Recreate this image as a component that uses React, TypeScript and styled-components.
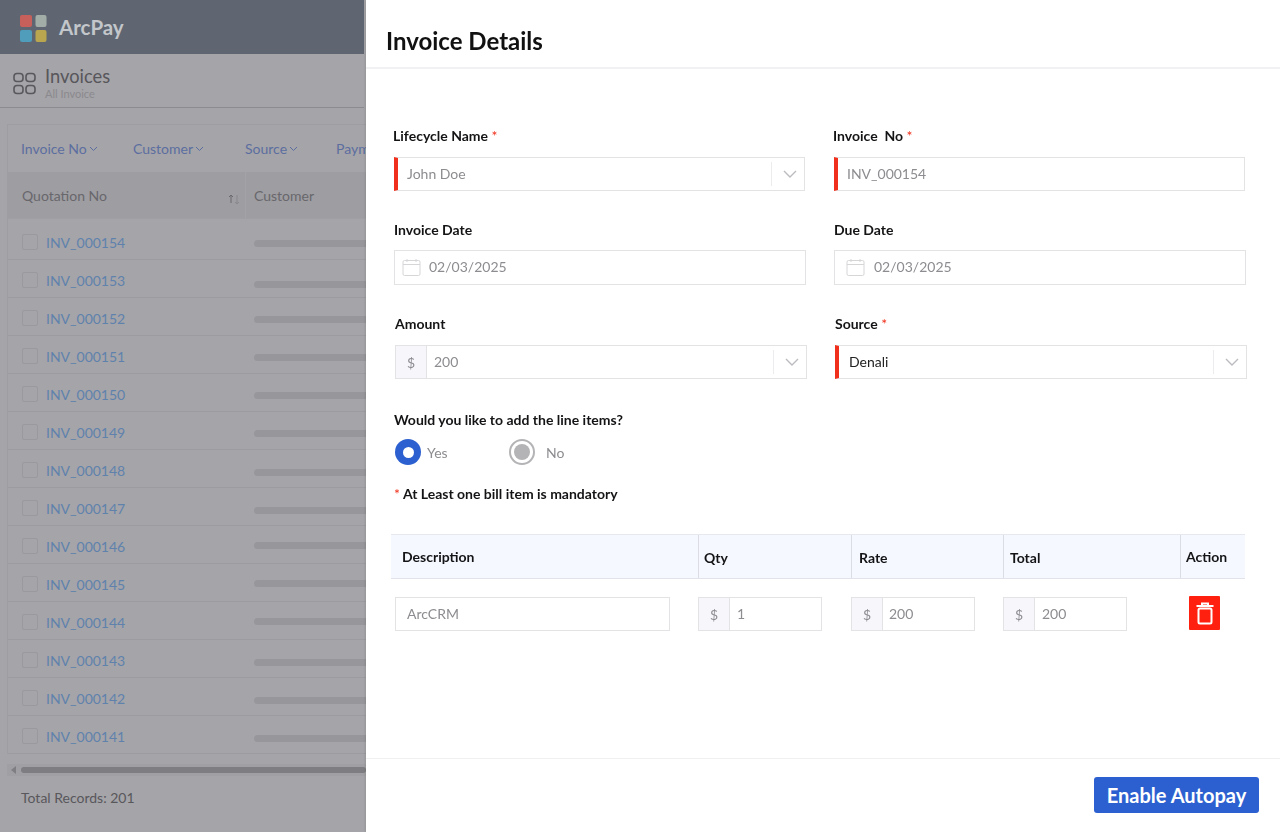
import React from 'react';
import styled, { createGlobalStyle } from 'styled-components';

const GlobalStyle = createGlobalStyle`
  html, body {
    margin: 0;
    padding: 0;
    height: 100%;
    overflow: hidden;
    font-family: 'Lato', 'Liberation Sans', sans-serif;
    background: #a5a4a8;
  }
  * {
    box-sizing: border-box;
  }
`;

const Page = styled.div`
  width: 1280px;
  height: 832px;
  background: #a5a4a8;
  overflow: hidden;
`;

const TopBar = styled.div`
  height: 54px;
  width: 364px;
  background: #5f6672;
  display: flex;
  align-items: center;
  padding-left: 20px;
  gap: 12px;
`;

const LogoMark = styled.svg`
  margin-top: 4px;
  flex: none;
`;

const Brand = styled.span`
  font-size: 20.5px;
  font-weight: 700;
  color: #c3c6ca;
`;

const SubHeader = styled.div`
  height: 54px;
  width: 364px;
  border-bottom: 1px solid #8c8b8f;
  display: flex;
  align-items: center;
  padding: 3px 0 0 13px;
  gap: 9px;
`;

const AppsMark = styled.svg`
  margin-top: 2px;
  flex: none;
`;

const SubTitle = styled.div`
  font-size: 18.3px;
  line-height: 22px;
  color: #57565b;
`;

const SubCaption = styled.div`
  font-size: 11px;
  line-height: 12px;
  margin-top: 1px;
  color: #8a898e;
`;

const Card = styled.div`
  margin: 16px 0 0 7px;
  width: 400px;
  border: 1px solid #9e9da1;
  border-bottom: 0;
`;

const FilterRow = styled.div`
  height: 47px;
  display: flex;
  align-items: center;
  padding-left: 13px;
`;

const Filter = styled.div<{ $width: number }>`
  width: ${(props) => props.$width}px;
  flex: none;
  display: flex;
  align-items: center;
  gap: 2px;
  font-size: 14px;
  color: #5c6ea0;
`;

const HeadRow = styled.div`
  height: 47px;
  background: #9e9da1;
  border-bottom: 1px solid #a09fa3;
  display: flex;
  align-items: stretch;
  font-size: 14px;
  color: #68676c;
`;

const HeadCell = styled.div<{ $width: number }>`
  width: ${(props) => props.$width}px;
  flex: none;
  display: flex;
  align-items: center;
  justify-content: space-between;
  padding: 0 5px 0 14px;
  border-right: 1px solid #a3a2a6;
`;

const SortMark = styled.svg`
  margin-top: 7px;
  flex: none;
`;

const HeadCustomer = styled.div`
  display: flex;
  align-items: center;
  padding-left: 8px;
`;

const Rows = styled.div`
  padding-top: 3px;
`;

const Row = styled.div`
  height: 38px;
  border-bottom: 1px solid #9c9b9f;
  display: flex;
  align-items: center;
  padding: 3px 0 0 14px;
`;

const Check = styled.span`
  width: 16px;
  height: 16px;
  border: 1px solid #9a999d;
  border-radius: 2px;
  flex: none;
`;

const RowLink = styled.span`
  width: 208px;
  flex: none;
  margin-left: 8px;
  font-size: 14px;
  color: #5f82ad;
`;

const Skeleton = styled.span<{ $nudge: number }>`
  flex: 1;
  height: 7px;
  border-radius: 4px;
  background: #97969a;
  transform: translateY(${(props) => props.$nudge}px);
`;

const ScrollTrack = styled.div`
  margin: 10px 0 0 7px;
  width: 359px;
  height: 12px;
  background: #a09fa3;
  display: flex;
  align-items: center;
  padding-left: 4px;
  gap: 5px;
`;

const ScrollArrow = styled.span`
  width: 0;
  height: 0;
  border-top: 4px solid transparent;
  border-bottom: 4px solid transparent;
  border-right: 5px solid #7f7e82;
`;

const ScrollThumb = styled.span`
  flex: 1;
  height: 6px;
  border-radius: 3px;
  background: #7e7d81;
`;

const TotalRecords = styled.div`
  margin: 13px 0 0 21px;
  font-size: 14px;
  line-height: 18px;
  color: #58575c;
`;

const Drawer = styled.aside`
  position: fixed;
  top: 0;
  right: 0;
  bottom: 0;
  width: 914px;
  background: #fff;
  display: flex;
  flex-direction: column;
  box-shadow: -1px 0 2px rgba(0, 0, 0, 0.1);
`;

const DrawerHeader = styled.header`
  height: 69px;
  flex: none;
  border-bottom: 2px solid #f1f1f3;
  display: flex;
  align-items: center;
  padding: 13px 0 0 20px;
  font-size: 24px;
  font-weight: 700;
  color: #111;
`;

const DrawerBody = styled.div`
  flex: 1;
  padding: 57px 0 0 28px;
`;

const FormRow = styled.div<{ $width: number; $gap: number; $inset?: number; $top?: number }>`
  display: grid;
  grid-template-columns: 1fr 1fr;
  width: ${(props) => props.$width}px;
  column-gap: ${(props) => props.$gap}px;
  margin-left: ${(props) => props.$inset || 0}px;
  margin-top: ${(props) => props.$top || 0}px;
`;

const Label = styled.div<{ $pull?: boolean; $gap?: number }>`
  font-size: 14px;
  line-height: 20px;
  font-weight: 700;
  color: #141416;
  white-space: pre;
  margin-left: ${(props) => (props.$pull ? -1 : 0)}px;
  margin-bottom: ${(props) => props.$gap ?? 11}px;
`;

const Star = styled.span`
  color: #f0301c;
  font-weight: 400;
`;

const Field = styled.div<{ $tall?: boolean; $required?: boolean }>`
  height: ${(props) => (props.$tall ? 35 : 34)}px;
  border: 1px solid #e3e3e6;
  border-left: ${(props) => (props.$required ? '4px solid #f0301c' : '1px solid #e3e3e6')};
  display: flex;
  align-items: center;
  background: #fff;
`;

const FieldText = styled.span<{ $pad: number; $dark?: boolean }>`
  flex: 1;
  padding: 0 0 2px ${(props) => props.$pad}px;
  font-size: 14px;
  color: ${(props) => (props.$dark ? '#222' : '#8d8d91')};
`;

const SelectEnd = styled.span`
  width: 33px;
  height: 24px;
  flex: none;
  border-left: 1px solid #ececee;
  display: flex;
  align-items: center;
  justify-content: center;
  padding-left: 3px;
`;

const DateIcon = styled.svg<{ $left: number }>`
  margin-left: ${(props) => props.$left}px;
  flex: none;
`;

const Addon = styled.span`
  width: 31px;
  height: 100%;
  flex: none;
  background: #f6f6fb;
  border-right: 1px solid #e3e3e6;
  display: flex;
  align-items: center;
  justify-content: center;
  font-size: 14px;
  color: #8d8d91;
`;

const Question = styled(Label)`
  margin: 31px 0 0;
`;

const RadioRow = styled.div`
  display: flex;
  align-items: center;
  margin: 9px 0 0 1px;
  height: 26px;
`;

const RadioDot = styled.span<{ $on?: boolean }>`
  width: 26px;
  height: 26px;
  border-radius: 50%;
  flex: none;
  display: flex;
  align-items: center;
  justify-content: center;
  background: ${(props) => (props.$on ? '#2c60d0' : '#fff')};
  border: ${(props) => (props.$on ? '0' : '2px solid #b4b4b6')};
  &::after {
    content: '';
    width: ${(props) => (props.$on ? 11 : 16)}px;
    height: ${(props) => (props.$on ? 11 : 16)}px;
    border-radius: 50%;
    background: ${(props) => (props.$on ? '#fff' : '#b4b4b6')};
  }
`;

const RadioText = styled.span<{ $width: number; $gap: number }>`
  width: ${(props) => props.$width}px;
  margin-left: ${(props) => props.$gap}px;
  font-size: 14px;
  color: #8d8d91;
`;

const Mandatory = styled(Label)`
  margin: 19px 0 0;
`;

const LineTable = styled.div`
  margin: 30px 0 0 -3px;
  width: 854px;
`;

const LineHead = styled.div`
  display: grid;
  grid-template-columns: 307px 153px 152px 177px 65px;
  height: 45px;
  background: #f5f9ff;
  border-top: 1px solid #e7e8ee;
  border-bottom: 1px solid #e1e2ea;
`;

const LineHeadCell = styled.div<{ $first?: boolean; $lift?: boolean; $pad: number }>`
  display: flex;
  align-items: center;
  padding-left: ${(props) => props.$pad}px;
  padding-top: ${(props) => (props.$lift ? 0 : 1)}px;
  border-left: ${(props) => (props.$first ? '0' : '1px solid #dcdde4')};
  font-size: 14px;
  font-weight: 700;
  color: #141416;
`;

const LineRow = styled.div`
  display: grid;
  grid-template-columns: 307px 153px 152px 177px 65px;
  padding-top: 18px;
`;

const LineCell = styled.div<{ $inset?: number }>`
  padding-left: ${(props) => props.$inset || 0}px;
`;

const DescInput = styled(Field)`
  width: 275px;
`;

const MoneyInput = styled(Field)`
  width: 124px;
`;

const DeleteButton = styled.button`
  width: 31px;
  height: 34px;
  margin: -1px 0 0 9px;
  padding: 0;
  border: 0;
  border-radius: 1px;
  background: #ff2010;
  display: flex;
  align-items: center;
  justify-content: center;
`;

const DrawerFooter = styled.footer`
  height: 74px;
  flex: none;
  border-top: 1px solid #f0eff1;
  display: flex;
  justify-content: flex-end;
  align-items: flex-start;
  padding: 18px 21px 0 0;
`;

const PrimaryButton = styled.button`
  width: 165px;
  height: 36px;
  border: 0;
  border-radius: 3px;
  background: #2c60d0;
  color: #fff;
  font-family: inherit;
  font-size: 20px;
  font-weight: 700;
  padding: 0;
`;

const Logo = () => (
  <LogoMark width="27" height="28" viewBox="0 0 27 28">
    <rect x="0" y="0" width="12" height="12" rx="2" fill="#c7605a" />
    <rect x="15.500" y="0" width="11" height="12" rx="2" fill="#a3ada8" />
    <rect x="0" y="15" width="12" height="12" rx="2" fill="#4f9cbb" />
    <rect x="15.500" y="15" width="11" height="12" rx="2" fill="#baa64f" />
  </LogoMark>
);

const AppsIcon = () => (
  <AppsMark width="23" height="23" viewBox="0 0 23 23" fill="none" stroke="#59585d" strokeWidth="1.6">
    <rect x="1" y="1.500" width="9" height="8" rx="3" />
    <rect x="13" y="1.500" width="9" height="8" rx="3" />
    <rect x="1" y="13.500" width="9" height="8" rx="3" />
    <rect x="13" y="13.500" width="9" height="8" rx="3" />
  </AppsMark>
);

const SmallChevron = () => (
  <svg width="9" height="6" viewBox="0 0 9 6" fill="none" stroke="#5c6ea0" strokeWidth="1">
    <path d="M1 1l3.500 3.500L8 1" />
  </svg>
);

const SortIcon = () => (
  <SortMark width="12" height="12" viewBox="0 0 12 12" fill="none" strokeWidth="1">
    <path d="M3 10V2M1 4l2-2 2 2" stroke="#6a696e" />
    <path d="M9 2v9M7 9l2 2 2-2" stroke="#88878b" />
  </SortMark>
);

const Chevron = () => (
  <svg width="16" height="10" viewBox="0 0 16 10" fill="none" stroke="#bcbcc0" strokeWidth="1.4">
    <path d="M2 2l6 6 6-6" />
  </svg>
);

const CalendarIcon = ({ left }: { left: number }) => (
  <DateIcon $left={left} width="19" height="19" viewBox="0 0 19 19" fill="none" stroke="#d6d6d9" strokeWidth="1">
    <rect x="1" y="2.500" width="17" height="15" rx="1.500" />
    <path d="M1 6.500h17M5 1v3M14 1v3" />
  </DateIcon>
);

const TrashIcon = () => (
  <svg width="18" height="23" viewBox="0 0 18 23" fill="none" stroke="#fff" strokeWidth="2">
    <path d="M0.500 4h17" />
    <path d="M6 3V1.500h6V3" />
    <rect x="2.500" y="6.500" width="13" height="15" rx="1.500" />
  </svg>
);

const filters = [
  { name: 'Invoice No', width: 112 },
  { name: 'Customer', width: 112 },
  { name: 'Source', width: 91 },
  { name: 'Payment', width: 90 },
];

const invoices = [
  { no: 'INV_000154', nudge: 1 },
  { no: 'INV_000153', nudge: 4 },
  { no: 'INV_000152', nudge: 1 },
  { no: 'INV_000151', nudge: 1 },
  { no: 'INV_000150', nudge: 1 },
  { no: 'INV_000149', nudge: 1 },
  { no: 'INV_000148', nudge: 2 },
  { no: 'INV_000147', nudge: 2 },
  { no: 'INV_000146', nudge: -1 },
  { no: 'INV_000145', nudge: -1 },
  { no: 'INV_000144', nudge: -1 },
  { no: 'INV_000143', nudge: 2 },
  { no: 'INV_000142', nudge: 2 },
  { no: 'INV_000141', nudge: 2 },
];

const App: React.FC = () => {
  return (
    <>
      <GlobalStyle />
      <Page>
        <TopBar>
          <Logo />
          <Brand>ArcPay</Brand>
        </TopBar>
        <SubHeader>
          <AppsIcon />
          <div>
            <SubTitle>Invoices</SubTitle>
            <SubCaption>All Invoice</SubCaption>
          </div>
        </SubHeader>
        <Card>
          <FilterRow>
            {filters.map((item) => (
              <Filter key={item.name} $width={item.width}>
                {item.name}
                <SmallChevron />
              </Filter>
            ))}
          </FilterRow>
          <HeadRow>
            <HeadCell $width={238}>
              Quotation No
              <SortIcon />
            </HeadCell>
            <HeadCustomer>Customer</HeadCustomer>
          </HeadRow>
          <Rows>
            {invoices.map((item) => (
              <Row key={item.no}>
                <Check />
                <RowLink>{item.no}</RowLink>
                <Skeleton $nudge={item.nudge} />
              </Row>
            ))}
          </Rows>
        </Card>
        <ScrollTrack>
          <ScrollArrow />
          <ScrollThumb />
        </ScrollTrack>
        <TotalRecords>Total Records: 201</TotalRecords>
      </Page>

      <Drawer>
        <DrawerHeader>Invoice Details</DrawerHeader>
        <DrawerBody>
          <FormRow $width={851} $gap={29}>
            <div>
              <Label $pull>
                Lifecycle Name <Star>*</Star>
              </Label>
              <Field $required>
                <FieldText $pad={9}>John Doe</FieldText>
                <SelectEnd>
                  <Chevron />
                </SelectEnd>
              </Field>
            </div>
            <div>
              <Label $pull>
                {'Invoice  No '}
                <Star>*</Star>
              </Label>
              <Field $required>
                <FieldText $pad={9}>INV_000154</FieldText>
              </Field>
            </div>
          </FormRow>

          <FormRow $width={852} $gap={28} $top={29}>
            <div>
              <Label $gap={10}>Invoice Date</Label>
              <Field $tall>
                <CalendarIcon left={7} />
                <FieldText $pad={8}>02/03/2025</FieldText>
              </Field>
            </div>
            <div>
              <Label $gap={10}>Due Date</Label>
              <Field $tall>
                <CalendarIcon left={11} />
                <FieldText $pad={9}>02/03/2025</FieldText>
              </Field>
            </div>
          </FormRow>

          <FormRow $width={852} $gap={28} $inset={1} $top={29}>
            <div>
              <Label>Amount</Label>
              <Field>
                <Addon>$</Addon>
                <FieldText $pad={7}>200</FieldText>
                <SelectEnd>
                  <Chevron />
                </SelectEnd>
              </Field>
            </div>
            <div>
              <Label>
                Source <Star>*</Star>
              </Label>
              <Field $required>
                <FieldText $pad={10} $dark>
                  Denali
                </FieldText>
                <SelectEnd>
                  <Chevron />
                </SelectEnd>
              </Field>
            </div>
          </FormRow>

          <Question>Would you like to add the line items?</Question>
          <RadioRow>
            <RadioDot $on />
            <RadioText $width={82} $gap={6}>
              Yes
            </RadioText>
            <RadioDot />
            <RadioText $width={40} $gap={11}>
              No
            </RadioText>
          </RadioRow>
          <Mandatory>
            <Star>*</Star> At Least one bill item is mandatory
          </Mandatory>

          <LineTable>
            <LineHead>
              <LineHeadCell $first $lift $pad={11}>
                Description
              </LineHeadCell>
              <LineHeadCell $pad={5}>Qty</LineHeadCell>
              <LineHeadCell $pad={7}>Rate</LineHeadCell>
              <LineHeadCell $pad={6}>Total</LineHeadCell>
              <LineHeadCell $lift $pad={5}>
                Action
              </LineHeadCell>
            </LineHead>
            <LineRow>
              <LineCell $inset={4}>
                <DescInput>
                  <FieldText $pad={11}>ArcCRM</FieldText>
                </DescInput>
              </LineCell>
              <LineCell>
                <MoneyInput>
                  <Addon>$</Addon>
                  <FieldText $pad={7}>1</FieldText>
                </MoneyInput>
              </LineCell>
              <LineCell>
                <MoneyInput>
                  <Addon>$</Addon>
                  <FieldText $pad={6}>200</FieldText>
                </MoneyInput>
              </LineCell>
              <LineCell>
                <MoneyInput>
                  <Addon>$</Addon>
                  <FieldText $pad={7}>200</FieldText>
                </MoneyInput>
              </LineCell>
              <LineCell>
                <DeleteButton type="button">
                  <TrashIcon />
                </DeleteButton>
              </LineCell>
            </LineRow>
          </LineTable>
        </DrawerBody>
        <DrawerFooter>
          <PrimaryButton type="button">Enable Autopay</PrimaryButton>
        </DrawerFooter>
      </Drawer>
    </>
  );
};

export default App;
